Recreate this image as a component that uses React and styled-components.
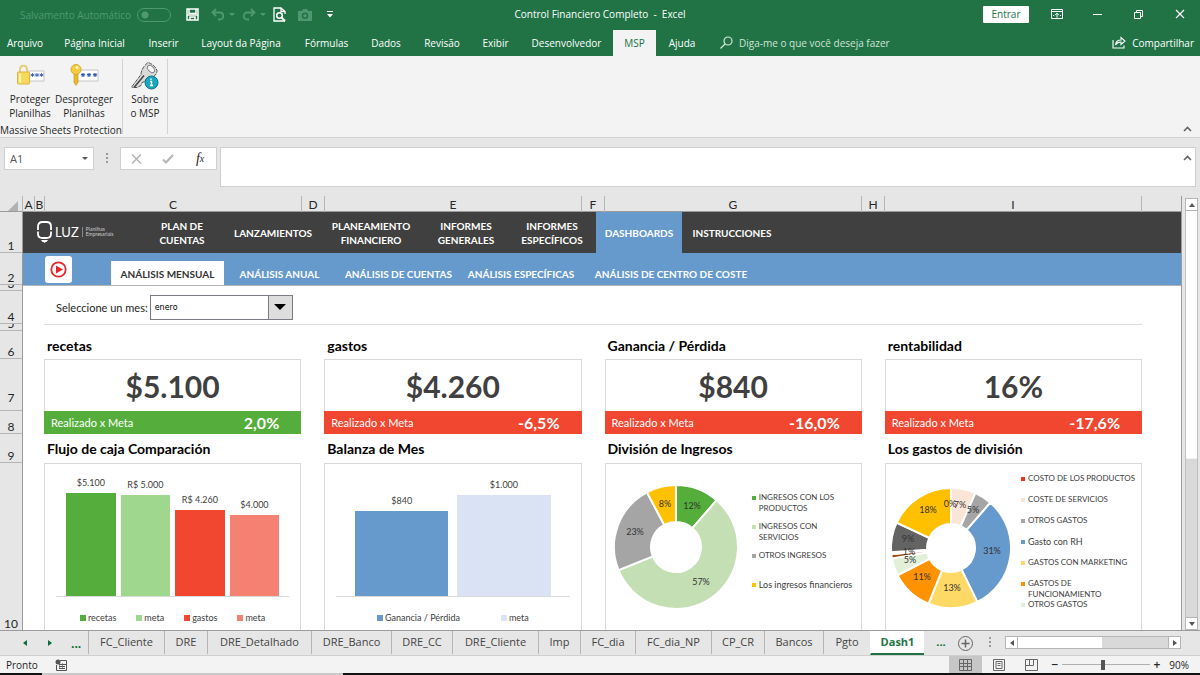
import React, { useState } from 'react'
import styled, { createGlobalStyle } from 'styled-components'

const GlobalStyle = createGlobalStyle`
* { box-sizing: border-box; margin: 0; padding: 0; }
body { font-family: "Open Sans", "Noto Sans", sans-serif; font-size: 10px; color: #262626; background: #e6e6e6; }
button { font: inherit; color: inherit; background: none; border: 0; cursor: pointer; }
input, select { font: inherit; color: inherit; }
a { color: inherit; text-decoration: none; }
ul { list-style: none; }
svg { display: block; flex: none; }
`

const ribbonTabs = [
  ['Arquivo', 50],
  ['Página Inicial', 89],
  ['Inserir', 49],
  ['Layout da Página', 106],
  ['Fórmulas', 65],
  ['Dados', 54],
  ['Revisão', 58],
  ['Exibir', 49],
  ['Desenvolvedor', 93],
  ['MSP', 43],
  ['Ajuda', 52],
]

// number, height, space under the number
const rows = [
  [1, 41, 0], [2, 32, 0], [3, 6, 0], [4, 33, 0], [5, 7, 0], [6, 28, 0], [7, 52, 6], [8, 23, 0], [9, 29, 0], [10, 0, 0],
]

const menu = [
  ['PLAN DE CUENTAS', 92],
  ['LANZAMIENTOS', 90],
  ['PLANEAMIENTO FINANCIERO', 106],
  ['INFORMES GENERALES', 84],
  ['INFORMES ESPECÍFICOS', 88],
  ['DASHBOARDS', 86],
  ['INSTRUCCIONES', 100],
]

const subMenu = [
  ['ANÁLISIS MENSUAL', 113],
  ['ANÁLISIS ANUAL', 111],
  ['ANÁLISIS DE CUENTAS', 127],
  ['ANÁLISIS ESPECÍFICAS', 118],
  ['ANÁLISIS DE CENTRO DE COSTE', 182],
]

const sheets = [
  ['FC_Cliente', 76], ['DRE', 43], ['DRE_Detalhado', 104], ['DRE_Banco', 80], ['DRE_CC', 61],
  ['DRE_Cliente', 86], ['Imp', 42], ['FC_dia', 55], ['FC_dia_NP', 76], ['CP_CR', 53],
  ['Bancos', 59], ['Pgto', 47], ['Dash1', 54],
]

const flujo = [
  { name: 'recetas', label: '$5.100', value: 5100, color: '#55ae3b' },
  { name: 'meta', label: 'R$ 5.000', value: 5000, color: '#9fd78f' },
  { name: 'gastos', label: 'R$ 4.260', value: 4260, color: '#f1462f' },
  { name: 'meta', label: '$4.000', value: 4000, color: '#f48172' },
]

const balanza = [
  { name: 'Ganancia / Pérdida', label: '$840', value: 840, color: '#6699cc' },
  { name: 'meta', label: '$1.000', value: 1000, color: '#dae3f3' },
]

const ingresos = [
  { to: 41, color: '#55ae3b', label: '12%', x: 78, y: 24 },
  { to: 248, color: '#c5dfb4', label: '57%', x: 87, y: 100 },
  { to: 332, color: '#a5a5a5', label: '23%', x: 21, y: 50 },
  { to: 360, color: '#ffc000', label: '8%', x: 51, y: 22 },
]

const ingresosLegend = [
  ['INGRESOS CON LOS PRODUCTOS', '#55ae3b'],
  ['INGRESOS CON SERVICIOS', '#c5dfb4'],
  ['OTROS INGRESOS', '#a5a5a5'],
  ['Los ingresos financieros', '#ffc000'],
]

const gastos = [
  { to: 0, color: '#f1462f', label: '0%', x: 61, y: 21 },
  { to: 24, color: '#fbe5d6', label: '7%', x: 71, y: 22 },
  { to: 41, color: '#a5a5a5', label: '5%', x: 84, y: 27 },
  { to: 154, color: '#6699cc', label: '31%', x: 103, y: 68 },
  { to: 202, color: '#ffd966', label: '13%', x: 63, y: 105 },
  { to: 243, color: '#ff9200', label: '11%', x: 33, y: 94 },
  { to: 260, color: '#e2f0d9', label: '5%', x: 21, y: 77 },
  { to: 264, color: '#9e480e', label: '1%', x: 20, y: 69 },
  { to: 266, color: '#ffffff', label: '', x: 0, y: 0 },
  { to: 295, color: '#636363', label: '9%', x: 19, y: 56 },
  { to: 360, color: '#ffc000', label: '18%', x: 39, y: 27 },
]

const gastosLegend = [
  ['COSTO DE LOS PRODUCTOS', '#f1311c'],
  ['COSTE DE SERVICIOS', '#fbe5d6'],
  ['OTROS GASTOS', '#a5a5a5'],
  ['Gasto con RH', '#6699cc'],
  ['GASTOS CON MARKETING', '#ffd966'],
  ['GASTOS DE FUNCIONAMIENTO', '#ff9200'],
  ['OTROS GASTOS', '#e2f0d9'],
]

const point = (c, r, deg) => {
  const a = (deg * Math.PI) / 180
  return `${c + r * Math.sin(a)} ${c - r * Math.cos(a)}`
}

const Donut = ({ slices, radius, hole, name }) => {
  const c = 62
  return (
    <svg width="124" height="124" viewBox="0 0 124 124" role="img" aria-label={name}>
      {slices.map((s, i) => {
        const from = i ? slices[i - 1].to : 0
        const big = s.to - from > 180 ? 1 : 0
        if (s.to === from) return null
        return (
          <path
            key={i}
            fill={s.color}
            stroke="#fff"
            strokeWidth="2"
            d={`M${point(c, radius, from)} A${radius} ${radius} 0 ${big} 1 ${point(c, radius, s.to)} L${point(c, hole, s.to)} A${hole} ${hole} 0 ${big} 0 ${point(c, hole, from)} Z`}
          />
        )
      })}
      {slices.map((s, i) => (
        <SliceText key={i} x={s.x} y={s.y}>{s.label}</SliceText>
      ))}
    </svg>
  )
}

const BarChart = ({ data, scale, side, gap, legendGap }) => (
  <ChartBox>
    <Bars $side={side} $gap={gap}>
      {data.map((d, i) => (
        <Bar key={i}>
          <span>{d.label}</span>
          <BarFill style={{ height: Math.round(d.value * scale), background: d.color }} />
        </Bar>
      ))}
    </Bars>
    <BarLegend $gap={legendGap}>
      {data.map((d, i) => (
        <li key={i}><Marker $color={d.color} $size={6} />{d.name}</li>
      ))}
    </BarLegend>
  </ChartBox>
)

const DonutChart = ({ children, items, pitch, top, left, right, legendTop, legendWidth }) => (
  <DonutBox $left={left} $right={right}>
    <DonutHolder $top={top}>{children}</DonutHolder>
    <SideLegend $top={legendTop} $width={legendWidth}>
      {items.map(([text, color], i) => (
        <LegendItem key={i} $pitch={pitch} $caps={text === text.toUpperCase()}>
          <Marker $color={color} $size={4} /><span>{text}</span>
        </LegendItem>
      ))}
    </SideLegend>
  </DonutBox>
)

const Panel = ({ title, value, percent, good, chartTitle, children }) => (
  <StylePanel>
    <PanelTitle $height={28}>{title}</PanelTitle>
    <Kpi>{value}</Kpi>
    <KpiFoot $good={good}><span>Realizado x Meta</span><b>{percent}</b></KpiFoot>
    <PanelTitle $height={29}>{chartTitle}</PanelTitle>
    <ChartCard>{children}</ChartCard>
  </StylePanel>
)

const Chevron = () => (
  <svg width="9" height="6" viewBox="0 0 9 6" fill="none" stroke="#666" strokeWidth="1.600"><path d="M1 5l3.500-3.500L8 5" /></svg>
)

const Caret = () => (
  <svg width="6" height="4" viewBox="0 0 6 4"><path d="M0 0h6L3 3z" fill="currentColor" /></svg>
)

const Arrow = ({ d, size = 8 }) => (
  <svg width={size} height={size} viewBox="0 0 8 8"><path d={d} fill="currentColor" /></svg>
)

const up = 'M1 6l3-4 3 4z'
const down = 'M1 2l3 4 3-4z'
const leftArrow = 'M6 1L2 4l4 3z'
const rightArrow = 'M2 1l4 3-4 3z'

const TitleBar = () => (
  <StyleTitleBar>
    <QuickAccess>
      <AutoSave>Salvamento Automático
        <input type="checkbox" role="switch" />
      </AutoSave>
      <QuickButton $left={15} aria-label="Salvar">
        <svg width="13" height="13" viewBox="0 0 13 13" fill="none" stroke="#fff" strokeWidth="1.500">
          <path d="M1 1h11v11H1z" /><path d="M3 1v4.500h7V1" /><path d="M1 7h11" /><path d="M4 12V9h5v3" />
        </svg>
      </QuickButton>
      <QuickButton $left={12} $dim aria-label="Desfazer">
        <svg width="14" height="13" viewBox="0 0 14 13" fill="none" stroke="currentColor" strokeWidth="1.800"><path d="M5 1L1.500 4.500 5 8M2 4.500h6.500c5 0 5 7 0 7H7" /></svg>
        <Caret />
      </QuickButton>
      <QuickButton $left={7} $dim aria-label="Refazer">
        <svg width="14" height="13" viewBox="0 0 14 13" fill="none" stroke="currentColor" strokeWidth="1.800"><path d="M9 1l3.500 3.500L9 8M12 4.500H5.500c-5 0-5 7 0 7H7" /></svg>
        <Caret />
      </QuickButton>
      <QuickButton $left={7} aria-label="Visualizar impressão">
        <svg width="13" height="15" viewBox="0 0 13 15" fill="none" stroke="#fff" strokeWidth="1.300">
          <path d="M12 14H1V1h7l4 3.500V7M8 1v3.500h4" /><circle cx="6.500" cy="8.500" r="2.800" strokeWidth="1.600" /><path d="M8.500 10.500l3.500 3.500" strokeWidth="2" />
        </svg>
      </QuickButton>
      <QuickButton $left={12} $dim aria-label="Câmera">
        <svg width="14" height="12" viewBox="0 0 14 12"><path fillRule="evenodd" fill="currentColor" d="M0 2h4l1-2h4l1 2h4v10H0zM7 3.500a3.300 3.300 0 100 6.600 3.300 3.300 0 000-6.600zm0 1.500a1.800 1.800 0 110 3.600A1.800 1.800 0 017 5z" /></svg>
      </QuickButton>
      <QuickButton $left={15} aria-label="Personalizar">
        <svg width="6" height="7" viewBox="0 0 6 7" fill="#fff"><path d="M0 0h6v1H0zM0 3h6L3 6.500z" /></svg>
      </QuickButton>
    </QuickAccess>
    <h1>Control Financiero Completo &nbsp;-&nbsp; Excel</h1>
    <WindowButtons>
      <SignIn>Entrar</SignIn>
      <WindowButton aria-label="Faixa de opções">
        <svg width="12" height="10" viewBox="0 0 12 10" fill="none" stroke="#fff"><path d="M.5.500h11v9H.5zM1 2.500h10M6 8.500v-4M4 6.200l2-2 2 2M2 6.500h1M9 6.500h1" /></svg>
      </WindowButton>
      <WindowButton aria-label="Minimizar">
        <svg width="9" height="9" viewBox="0 0 9 9" stroke="#fff"><path d="M0 4.500h9" /></svg>
      </WindowButton>
      <WindowButton aria-label="Restaurar">
        <svg width="9" height="9" viewBox="0 0 9 9" fill="none" stroke="#fff"><path d="M.5 2.500h6v6h-6zM2.500 2.500v-2h6v6h-2" /></svg>
      </WindowButton>
      <WindowButton aria-label="Fechar">
        <svg width="10" height="10" viewBox="0 0 10 10" stroke="#fff" strokeWidth="1.200"><path d="M1 1l8 8M9 1L1 9" /></svg>
      </WindowButton>
    </WindowButtons>
  </StyleTitleBar>
)

const star = (x) => `M${x} 10.500v4M${x - 2} 11.500l4 2M${x + 2} 11.500l-4 2`

const Ribbon = () => (
  <StyleRibbon>
    <RibbonGroup $width={123}>
      <div>
        <RibbonButton $width={50}>
          <svg width="30" height="26" viewBox="0 0 30 26">
            <path d="M12 8.500h17v10H12z" fill="#fff" stroke="#c4c4c4" />
            <path d="M5 11V7c0-5 7-5 7 0v4" fill="none" stroke="#e6cf7c" strokeWidth="2" />
            <rect x="2.500" y="9.500" width="12" height="12" rx="1" fill="#f8d95c" stroke="#dfb440" />
            <path d="M5 11v9" stroke="#fdf3c0" strokeWidth="2" />
            <path d={star(17.5) + star(22) + star(26.5)} stroke="#3157b0" strokeWidth=".8" />
          </svg>
          Proteger Planilhas
        </RibbonButton>
        <RibbonButton $width={58}>
          <svg width="30" height="26" viewBox="0 0 30 26">
            <path d="M8 7.500h21v11H8z" fill="#fff" stroke="#c4c4c4" />
            <path d="M5 9h4v11l-2 3-2-3z" fill="#e8b92c" stroke="#c4921a" strokeWidth=".6" />
            <ellipse cx="7" cy="7" rx="5" ry="5" fill="#f5cd3c" stroke="#cf9d20" strokeWidth=".8" />
            <circle cx="8" cy="5" r="1.400" fill="#fff7cc" />
            <path d={star(14) + star(20) + star(26)} stroke="#2b55b3" strokeWidth="1.200" />
          </svg>
          Desproteger Planilhas
        </RibbonButton>
      </div>
      <p>Massive Sheets Protection</p>
    </RibbonGroup>
    <RibbonGroup $width={45}>
      <div>
        <RibbonButton $width={34}>
          <svg width="30" height="30" viewBox="0 0 30 30">
            <path d="M2 26l9-12c0-4 3-9 7-12 3 1 7 3 9 8 0 4-3 6-6 8h-4l-2 3-3 1-1 3-4 2H2z" fill="#dadada" stroke="#555" strokeDasharray="4 1" />
            <ellipse cx="21" cy="8.500" rx="4.500" ry="2.800" transform="rotate(45 21 8.500)" fill="#f8f8f8" stroke="#666" strokeWidth=".8" />
            <path d="M4 27l10-12" stroke="#444" strokeWidth="1.500" />
            <circle cx="21.500" cy="22" r="6.500" fill="#16a9c0" stroke="#0e7486" />
            <path d="M20 21h1.500v4M20 25h3M21 18v1.500" fill="none" stroke="#fff" strokeWidth="1.400" />
          </svg>
          Sobre <br />o MSP
        </RibbonButton>
      </div>
    </RibbonGroup>
    <Collapse aria-label="Recolher"><Chevron /></Collapse>
  </StyleRibbon>
)

const FormulaBar = () => (
  <StyleFormulaBar>
    <NameBox><input aria-label="Caixa de nome" defaultValue="A1" /><Caret /></NameBox>
    <Dots />
    <FxBox>
      <button aria-label="Cancelar"><svg width="11" height="10" viewBox="0 0 11 10" stroke="#b5b5b5" strokeWidth="1.500"><path d="M1 .500l9 9M10 .500l-9 9" /></svg></button>
      <button aria-label="Inserir"><svg width="12" height="10" viewBox="0 0 12 10" fill="none" stroke="#b5b5b5" strokeWidth="2"><path d="M1 5.500L4 8.500 11 1" /></svg></button>
      <button><i>f</i><small>x</small></button>
    </FxBox>
    <FormulaInput>
      <input aria-label="Barra de fórmulas" />
      <button aria-label="Recolher barra"><Chevron /></button>
    </FormulaInput>
  </StyleFormulaBar>
)

const Dashboard = () => {
  const [month, setMonth] = useState('enero')
  return (
    <StyleDashboard>
      <MainNav>
        <Brand href="#">
          <svg width="15" height="22" viewBox="0 0 15 22" fill="none" stroke="#fff" strokeWidth="1.800">
            <path d="M1 9V5.500Q1 1 5.500 1h4Q14 1 14 5.500V9" /><path d="M1 10.500V13q0 4 4.500 4h4Q14 17 14 13v-2.500" /><path d="M4 19h7l-1.500 2H8.500l-1 1-1-1h-1z" fill="#fff" stroke="none" />
          </svg>
          <b>LUZ</b>
          <span>Planilhas Empresariais</span>
        </Brand>
        {menu.map(([text, w]) => (
          <MainLink href="#" key={text} $width={w} $active={text === 'DASHBOARDS'}>{text}</MainLink>
        ))}
      </MainNav>
      <SubNav>
        <Play aria-label="Video">
          <svg width="17" height="17" viewBox="0 0 17 17"><circle cx="8.500" cy="8.500" r="7.200" fill="none" stroke="#e8262a" strokeWidth="1.800" /><path d="M6 4.500l7 4-7 4z" fill="#e8262a" /></svg>
        </Play>
        {subMenu.map(([text, w]) => (
          <SubLink href="#" key={text} $width={w} $active={text === 'ANÁLISIS MENSUAL'}>{text}</SubLink>
        ))}
      </SubNav>
      <MonthRow>
        <label htmlFor="month">Seleccione un mes:</label>
        <MonthSelect>
          <select id="month" value={month} onChange={(e) => setMonth(e.target.value)}>
            <option>enero</option>
            <option>febrero</option>
            <option>marzo</option>
          </select>
          <span><svg width="12" height="6" viewBox="0 0 12 6"><path d="M0 0h12L6 6z" /></svg></span>
        </MonthSelect>
      </MonthRow>
      <Panels>
        <Panel title="recetas" value="$5.100" percent="2,0%" good chartTitle="Flujo de caja Comparación">
          <BarChart data={flujo} scale={0.0202} side={10} gap={5} legendGap={20} />
        </Panel>
        <Panel title="gastos" value="$4.260" percent="-6,5%" chartTitle="Balanza de Mes">
          <BarChart data={balanza} scale={0.101} side={19} gap={9} legendGap={41} />
        </Panel>
        <Panel title="Ganancia / Pérdida" value="$840" percent="-16,0%" chartTitle="División de Ingresos">
          <DonutChart items={ingresosLegend} pitch={29} top={21} left={8} right={7} legendTop={28} legendWidth={102}>
            <Donut slices={ingresos} radius={62} hole={25} name="División de Ingresos" />
          </DonutChart>
        </Panel>
        <Panel title="rentabilidad" value="16%" percent="-17,6%" chartTitle="Los gastos de división">
          <DonutChart items={gastosLegend} pitch={21} top={22} left={3} right={0} legendTop={9} legendWidth={120}>
            <Donut slices={gastos} radius={60} hole={24} name="Los gastos de división" />
          </DonutChart>
        </Panel>
      </Panels>
    </StyleDashboard>
  )
}

const App = () => (
  <Page>
    <GlobalStyle />
    <TitleBar />
    <TabBar>
      {ribbonTabs.map(([text, w]) => (
        <RibbonTab key={text} $width={w} $active={text === 'MSP'}>{text}</RibbonTab>
      ))}
      <TellMe>
        <svg width="13" height="13" viewBox="0 0 13 13" fill="none" stroke="#d5e6dc" strokeWidth="1.200"><circle cx="8" cy="5" r="4" /><path d="M5 8l-4.500 4.500" /></svg>
        <input placeholder="Diga-me o que você deseja fazer" aria-label="Diga-me o que você deseja fazer" />
      </TellMe>
      <Share>
        <svg width="14" height="13" viewBox="0 0 14 13" fill="none" stroke="#fff" strokeWidth="1.100"><path d="M1 4v8h11V9.500M3.500 9c.5-4 3-5 5.500-5V1.500L13 5 9 8.500V6C7 6 5 6.500 3.500 9z" /></svg>
        Compartilhar
      </Share>
    </TabBar>
    <Ribbon />
    <FormulaBar />
    <Workspace>
      <Grid>
        <ColumnHeader>
          <Corner><svg width="10" height="10" viewBox="0 0 10 10"><path d="M10 0v10H0z" fill="#b1b1b1" /></svg></Corner>
          {['A', 'B', 'C', 'D', 'E', 'F', 'G', 'H', 'I', ''].map((c) => <span key={c}>{c}</span>)}
        </ColumnHeader>
        <SheetArea>
          <RowHeader>
            {rows.map(([n, h, pad]) => <RowNumber key={n} $height={h} $pad={pad}>{n}</RowNumber>)}
          </RowHeader>
          <Dashboard />
        </SheetArea>
      </Grid>
      <VScroll>
        <button aria-label="Para cima"><Arrow d={up} /></button>
        <VThumb />
        <button aria-label="Para baixo"><Arrow d={down} /></button>
      </VScroll>
    </Workspace>
    <SheetTabs>
      <TabArrows>
        <button aria-label="Anterior"><Arrow d={leftArrow} /></button>
        <button aria-label="Próxima"><Arrow d={rightArrow} /></button>
        <b>...</b>
      </TabArrows>
      {sheets.map(([text, w]) => (
        <SheetTab key={text} $width={w} $active={text === 'Dash1'}>{text}</SheetTab>
      ))}
      <MoreTabs><b>...</b></MoreTabs>
      <AddSheet aria-label="Nova planilha">
        <svg width="15" height="15" viewBox="0 0 15 15" fill="none" stroke="#666"><circle cx="7.500" cy="7.500" r="7" /><path d="M3.500 7.500h8M7.500 3.500v8" strokeWidth="1.500" /></svg>
      </AddSheet>
      <Dots />
      <HScroll>
        <button aria-label="Esquerda"><Arrow d={leftArrow} /></button>
        <HThumb />
        <button aria-label="Direita"><Arrow d={rightArrow} /></button>
      </HScroll>
    </SheetTabs>
    <StatusBar>
      <span>Pronto</span>
      <svg width="12" height="12" viewBox="0 0 12 12" fill="none" stroke="#555"><path d="M5 1.500h6.500v10h-10V6M4 5.500h7M4 7.500h6M4 9.500h6" /><path d="M4.500 5v5M7.500 4v6" strokeWidth=".6" /><circle cx="3" cy="3" r="2.500" fill="#555" stroke="none" /></svg>
      <Views>
        <ViewButton $active aria-label="Normal">
          <svg width="13" height="12" viewBox="0 0 13 12" fill="none" stroke="#666"><path d="M.5.500h12v11H.5zM.5 4.500h12M.5 7.500h12M4.500 0v12M8.500 0v12" /></svg>
        </ViewButton>
        <ViewButton aria-label="Layout da Página">
          <svg width="12" height="12" viewBox="0 0 12 12" fill="none" stroke="#666"><path d="M.5.500h11v11H.5zM3 2.500h6v7H3zM4.500 4.500h3M4.500 6.500h3" /></svg>
        </ViewButton>
        <ViewButton aria-label="Quebra de Página">
          <svg width="13" height="12" viewBox="0 0 13 12" fill="none" stroke="#666"><path d="M.5.500h12v11H.5zM4.500 0v6.500M8.500 0v6.500M.5 6.500h8" /></svg>
        </ViewButton>
        <ZoomStep>−</ZoomStep>
        <ZoomRange type="range" min="10" max="182" defaultValue="90" aria-label="Zoom" />
        <ZoomStep>+</ZoomStep>
        <ZoomValue>90%</ZoomValue>
      </Views>
    </StatusBar>
    <BottomEdge />
  </Page>
)

const sheetFont = 'Lato, "Open Sans", sans-serif'

const Page = styled.div`
display: flex;
flex-direction: column;
min-height: 100vh;
overflow: hidden;
`

// title bar
const StyleTitleBar = styled.header`
display: grid;
grid-template-columns: 1fr auto 1fr;
align-items: center;
height: 29px;
padding-bottom: 1px;
background: #217346;
color: white;
h1 {
    font-size: 10px;
    font-weight: 400;
}
`
const QuickAccess = styled.div`
display: flex;
align-items: center;
padding: 1px 0 0 20px;
`
const AutoSave = styled.label`
display: flex;
align-items: center;
gap: 6px;
white-space: nowrap;
color: #4f9871;
input {
    appearance: none;
    width: 34px;
    height: 14px;
    border: 1px solid #4f9871;
    border-radius: 7px;
    background: radial-gradient(circle at 7px 6px, #4f9871 3px, transparent 4px);
}
`
const QuickButton = styled.button`
display: flex;
align-items: center;
gap: 4px;
margin-left: ${({ $left }) => $left}px;
color: ${({ $dim }) => ($dim ? '#4f9871' : 'white')};
`
const WindowButtons = styled.div`
display: flex;
justify-content: flex-end;
align-items: center;
`
const SignIn = styled.button`
width: 46px;
height: 17px;
margin-right: 7px;
background: white;
color: #217346;
border-radius: 1px;
`
const WindowButton = styled.button`
display: flex;
justify-content: center;
width: 41px;
`

// ribbon
const TabBar = styled.nav`
display: flex;
height: 27px;
padding-top: 1px;
background: #217346;
color: white;
`
const RibbonTab = styled.button`
width: ${({ $width }) => $width}px;
flex: none;
padding-bottom: 1px;
white-space: nowrap;
background: ${({ $active }) => ($active ? '#f3f3f3' : 'transparent')};
color: ${({ $active }) => ($active ? '#217346' : 'white')};
`
const TellMe = styled.label`
display: flex;
align-items: center;
flex: 1;
gap: 6px;
padding: 0 0 1px 12px;
input {
    width: 200px;
    border: 0;
    outline: 0;
    background: none;
}
input::placeholder {
    color: #cfe2d7;
    opacity: 1;
}
`
const Share = styled.button`
display: flex;
align-items: center;
gap: 6px;
padding: 0 6px 1px 0;
`
const StyleRibbon = styled.section`
display: flex;
height: 82px;
padding: 3px 0;
background: #f3f3f3;
border-bottom: 1px solid #d2d2d2;
`
const RibbonGroup = styled.div`
display: flex;
flex-direction: column;
justify-content: space-between;
align-items: center;
width: ${({ $width }) => $width}px;
border-right: 1px solid #d2d2d2;
white-space: nowrap;
div {
    display: flex;
    align-self: flex-start;
    padding-left: 5px;
}
p {
    line-height: 8px;
}
`
const RibbonButton = styled.button`
display: flex;
flex-direction: column;
align-items: center;
width: ${({ $width }) => $width}px;
line-height: 14px;
white-space: normal;
svg {
    height: 33px;
}
`
const Collapse = styled.button`
align-self: flex-end;
margin-left: auto;
padding: 0 8px 2px;
`

// formula bar
const StyleFormulaBar = styled.section`
display: flex;
align-items: flex-start;
height: 58px;
padding: 9px 4px 0;
`
const NameBox = styled.div`
display: flex;
align-items: center;
width: 90px;
height: 23px;
padding: 0 5px;
background: white;
border: 1px solid #cfcfcf;
color: #555;
font-size: 11px;
input {
    flex: 1;
    min-width: 0;
    border: 0;
    outline: 0;
}
`
const Dots = styled.i`
width: 2px;
height: 11px;
margin: 6px 12px;
background: repeating-linear-gradient(#9a9a9a 0 2px, transparent 2px 4px);
`
const FxBox = styled.div`
display: flex;
justify-content: space-around;
width: 97px;
height: 23px;
background: white;
border: 1px solid #cfcfcf;
font-family: "Liberation Serif", serif;
font-size: 14px;
button {
    display: flex;
    align-items: center;
    justify-content: center;
    width: 30px;
}
small {
    font-size: 10px;
    font-style: italic;
}
`
const FormulaInput = styled.div`
display: flex;
align-items: flex-start;
flex: 1;
height: 40px;
margin-left: 3px;
background: white;
border: 1px solid #cfcfcf;
input {
    flex: 1;
    border: 0;
    outline: 0;
    background: none;
}
button {
    padding: 7px 3px;
}
`

// grid
const Workspace = styled.main`
display: flex;
flex: 1;
`
const Grid = styled.div`
display: flex;
flex-direction: column;
flex: 1;
border-right: 1px solid #9b9b9b;
`
const columns = '12px 10px 1fr 23px 1fr 23px 1fr 23px 1fr 39px'
const ColumnHeader = styled.div`
display: grid;
grid-template-columns: 23px ${columns};
height: 16px;
border-bottom: 1px solid #9b9b9b;
font-family: ${sheetFont};
font-size: 12px;
line-height: 17px;
text-align: center;
span {
    border-right: 1px solid #b5b5b5;
}
span:last-child {
    border: 0;
}
`
const Corner = styled.div`
display: flex;
justify-content: flex-end;
align-items: flex-end;
padding: 0 4px 2px 0;
border-right: 1px solid #b5b5b5;
`
const SheetArea = styled.div`
display: flex;
flex: 1;
`
const RowHeader = styled.div`
display: flex;
flex-direction: column;
width: 23px;
border-right: 1px solid #9b9b9b;
font-family: ${sheetFont};
font-size: 12px;
`
const RowNumber = styled.div`
display: flex;
justify-content: center;
align-items: flex-end;
flex: ${({ $height }) => ($height ? `0 0 ${$height}px` : '1')};
padding-bottom: ${({ $pad }) => $pad}px;
overflow: hidden;
line-height: 12px;
border-bottom: 1px solid #b5b5b5;
&:last-child {
    border: 0;
}
`
const StyleDashboard = styled.div`
display: flex;
flex-direction: column;
flex: 1;
background: white;
font-family: ${sheetFont};
`
const MainNav = styled.nav`
display: flex;
height: 41px;
background: #404040;
color: white;
`
const Brand = styled.a`
display: flex;
align-items: center;
gap: 3px;
width: 113px;
padding: 0 22px 2px 14px;
b {
    font-size: 13px;
    font-weight: 400;
}
span {
    padding-left: 3px;
    border-left: 1px solid #888;
    font-size: 5px;
    line-height: 5px;
    color: #ccc;
}
`
const MainLink = styled.a`
display: flex;
align-items: center;
justify-content: center;
width: ${({ $width }) => $width}px;
padding: 0 8px;
font-weight: 700;
line-height: 14px;
text-align: center;
background: ${({ $active }) => ($active ? '#6699cc' : 'transparent')};
`
const SubNav = styled.nav`
display: flex;
align-items: flex-end;
height: 33px;
padding-left: 22px;
background: #6699cc;
border-bottom: 1px solid #b5b5b5;
`
const Play = styled.button`
display: flex;
align-items: center;
justify-content: center;
width: 27px;
height: 27px;
margin: 0 39px 2px 0;
border-radius: 3px;
background: white;
`
const SubLink = styled.a`
width: ${({ $width }) => $width}px;
height: 24px;
font-weight: 700;
line-height: 26px;
text-align: center;
white-space: nowrap;
color: ${({ $active }) => ($active ? '#333' : 'white')};
background: ${({ $active }) => ($active ? 'white' : 'transparent')};
`
const MonthRow = styled.div`
display: flex;
align-items: center;
gap: 2px;
height: 39px;
margin: 0 39px 0 21px;
padding: 4px 0 0 12px;
border-bottom: 1px solid #dcdcdc;
label {
    font-size: 11px;
}
`
const MonthSelect = styled.div`
display: flex;
width: 143px;
height: 25px;
border: 1px solid #7b7b86;
select {
    appearance: none;
    flex: 1;
    padding-left: 4px;
    border: 0;
    background: white;
    font-family: "DejaVu Sans", sans-serif;
    font-size: 8px;
    color: black;
}
span {
    display: flex;
    align-items: center;
    justify-content: center;
    width: 24px;
    background: #dedede;
    border-left: 1px solid #7b7b86;
}
`
const Panels = styled.div`
display: grid;
grid-template-columns: repeat(4, minmax(0, 1fr));
column-gap: 23px;
flex: 1;
padding: 6px 39px 0 21px;
`
const StylePanel = styled.section`
display: flex;
flex-direction: column;
`
const PanelTitle = styled.h2`
height: ${({ $height }) => $height}px;
padding-left: 3px;
font-size: 14px;
font-weight: 700;
line-height: 30px;
color: black;
`
const Kpi = styled.div`
height: 52px;
border: 1px solid #d9d9d9;
border-bottom: 0;
font-size: 30px;
font-weight: 700;
line-height: 52px;
text-align: center;
color: #404040;
`
const KpiFoot = styled.div`
display: flex;
align-items: center;
justify-content: space-between;
height: 23px;
padding: 0 22px 0 7px;
color: white;
font-size: 11px;
background: ${({ $good }) => ($good ? '#55ae3b' : '#f1462f')};
b {
    font-size: 16px;
}
`
const ChartCard = styled.div`
flex: 1;
min-height: 167px;
border: 1px solid #d9d9d9;
border-bottom: 0;
font-size: 9px;
color: #404040;
`
const ChartBox = styled.div`
padding: 0 11px;
`
const Bars = styled.div`
display: flex;
align-items: flex-end;
gap: ${({ $gap }) => $gap}px;
height: 133px;
padding: 0 ${({ $side }) => $side}px;
border-bottom: 1px solid #d9d9d9;
`
const Bar = styled.div`
flex: 1;
text-align: center;
white-space: nowrap;
`
const BarFill = styled.div`
margin-top: 5px;
`
const BarLegend = styled.ul`
display: flex;
justify-content: center;
gap: ${({ $gap }) => $gap}px;
margin-top: 15px;
li {
    display: flex;
    align-items: center;
    gap: 2px;
}
`
const Marker = styled.i`
flex: none;
width: ${({ $size }) => $size}px;
height: ${({ $size }) => $size}px;
background: ${({ $color }) => $color};
`
const DonutBox = styled.div`
display: flex;
justify-content: space-between;
padding: 0 ${({ $right }) => $right}px 0 ${({ $left }) => $left}px;
`
const DonutHolder = styled.div`
padding-top: ${({ $top }) => $top}px;
`
const SideLegend = styled.ul`
width: ${({ $width }) => $width}px;
padding-top: ${({ $top }) => $top}px;
`
const LegendItem = styled.li`
display: flex;
gap: 3px;
height: ${({ $pitch }) => $pitch}px;
font-size: ${({ $caps }) => ($caps ? 8 : 9)}px;
line-height: 11px;
i {
    margin-top: 4px;
}
`
const SliceText = styled.text`
font-size: 9px;
fill: #333;
text-anchor: middle;
`

// scroll bars
const VScroll = styled.div`
display: flex;
flex-direction: column;
width: 18px;
padding: 2px 2px 0 3px;
button {
    display: flex;
    align-items: center;
    justify-content: center;
    height: 13px;
    background: white;
    border: 1px solid #b5b5b5;
    color: #555;
}
`
const VThumb = styled.div`
flex: 1;
background: linear-gradient(white, white) no-repeat 0 0 / 100% 61%, #d9d9d9;
border: 1px solid #c0c0c0;
border-width: 0 1px;
`
const SheetTabs = styled.nav`
display: flex;
height: 26px;
border-top: 1px solid #9b9b9b;
border-bottom: 1px solid #cfcfcf;
color: #444;
font-size: 11px;
`
const TabArrows = styled.div`
display: flex;
align-items: center;
width: 88px;
padding-left: 21px;
gap: 17px;
color: #0c6b3a;
b {
    font-size: 12px;
}
`
const SheetTab = styled.button`
width: ${({ $width }) => $width}px;
flex: none;
padding-bottom: 2px;
border-left: 1px solid ${({ $active }) => ($active ? 'white' : '#b5b5b5')};
border-bottom: 2px solid ${({ $active }) => ($active ? '#217346' : 'transparent')};
background: ${({ $active }) => ($active ? 'white' : 'transparent')};
color: ${({ $active }) => ($active ? '#217346' : '#444')};
font-weight: ${({ $active }) => ($active ? 700 : 400)};
`
const MoreTabs = styled.div`
width: 34px;
text-align: center;
line-height: 22px;
color: #0c6b3a;
`
const AddSheet = styled.button`
margin-right: 4px;
`
const HScroll = styled.div`
display: flex;
width: 176px;
height: 13px;
margin: 5px 19px 0 auto;
button {
    display: flex;
    align-items: center;
    justify-content: center;
    width: 13px;
    border: 1px solid #b5b5b5;
    background: white;
    color: #555;
}
`
const HThumb = styled.div`
flex: 1;
background: linear-gradient(white, white) no-repeat 0 0 / 56% 100%, #d9d9d9;
border: 1px solid #b5b5b5;
border-width: 1px 0;
`

// status bar
const StatusBar = styled.footer`
display: flex;
align-items: center;
gap: 17px;
height: 17px;
padding-left: 6px;
background: #f3f3f3;
`
const Views = styled.div`
display: flex;
align-items: center;
height: 17px;
margin-left: auto;
padding-right: 11px;
`
const ViewButton = styled.button`
display: flex;
align-items: center;
justify-content: center;
width: 33px;
height: 17px;
background: ${({ $active }) => ($active ? '#c6c6c6' : 'transparent')};
`
const ZoomStep = styled.button`
width: 14px;
font-size: 12px;
font-weight: 600;
line-height: 16px;
`
const ZoomRange = styled.input`
appearance: none;
width: 88px;
height: 12px;
background: linear-gradient(#b0b0b0, #b0b0b0) no-repeat center / 100% 1px;
&::-webkit-slider-thumb {
    appearance: none;
    width: 4px;
    height: 10px;
    background: #555;
}
`
const ZoomValue = styled.span`
width: 25px;
text-align: right;
`
const BottomEdge = styled.div`
height: 2px;
background: linear-gradient(90deg, #111 42px, #c8c8c8 42px 343px, #111 343px);
`

export default App
